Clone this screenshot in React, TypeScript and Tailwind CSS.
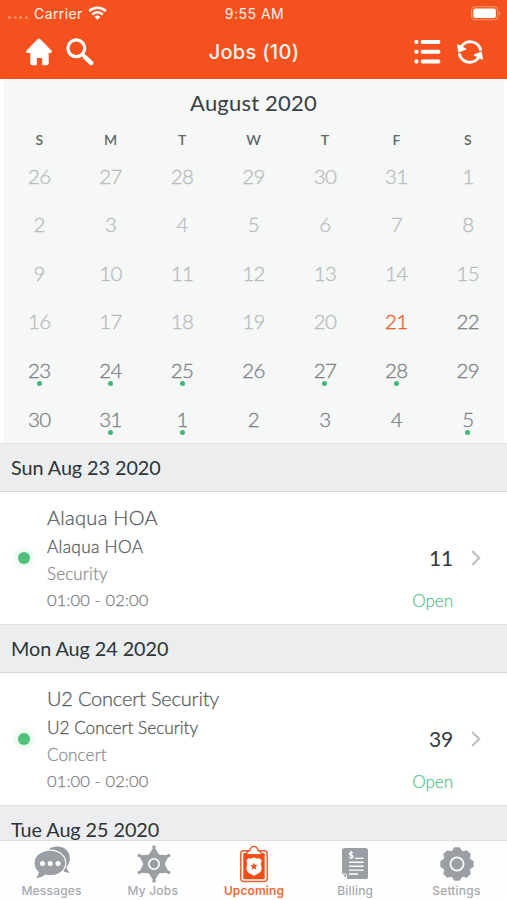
import React from "react";

const lato = "font-['Lato','Open_Sans',sans-serif]";
const inter = "font-['Inter','Roboto',sans-serif]";

type Day = { n: number; tone: "past" | "today" | "next"; dot?: boolean };

const past = (n: number): Day => ({ n, tone: "past" });
const next = (n: number, dot = false): Day => ({ n, tone: "next", dot });

const days: Day[] = [
  ...[26, 27, 28, 29, 30, 31, 1, 2, 3, 4, 5, 6, 7, 8, 9, 10, 11, 12, 13, 14, 15, 16, 17, 18, 19, 20].map(past),
  { n: 21, tone: "today" },
  next(22),
  next(23, true),
  next(24, true),
  next(25, true),
  next(26),
  next(27, true),
  next(28, true),
  next(29),
  next(30),
  next(31, true),
  next(1, true),
  next(2),
  next(3),
  next(4),
  next(5, true),
];

const tones = {
  past: "text-[#b9bdc0]",
  today: "text-[#f2592a]",
  next: "text-[#7f8588]",
};

function StatusBar() {
  return (
    <div className={`grid h-[26px] grid-cols-3 items-center pr-[6px] pl-[8px] text-[14px] text-[#fff3ec] ${inter}`}>
      <div className="flex items-center">
        <div className="mt-[8px] flex w-[26px] gap-[2.5px]">
          {[0, 1, 2, 3].map((i) => (
            <span key={i} className="size-[3px] rounded-full bg-[#fb9468]" />
          ))}
        </div>
        <span className="tracking-[0.4px]">Carrier</span>
        <svg className="ml-[5px]" width="19" height="14" viewBox="0 0 19 14" fill="none" stroke="#fff" strokeWidth="2.5">
          <path d="M1.2 5.2a11.8 11.8 0 0 1 16.6 0" />
          <path d="M4.2 8.5a7.5 7.5 0 0 1 10.6 0" />
          <path d="M9.5 13.8 6.6 10.9a4.1 4.1 0 0 1 5.8 0z" fill="#fff" stroke="none" />
        </svg>
      </div>
      <span className="text-center tracking-[0.5px]">9:55 AM</span>
      <svg className="justify-self-end" width="30" height="15" viewBox="0 0 30 15">
        <rect x="0.6" y="0.8" width="26" height="13" rx="3.5" fill="none" stroke="#fb9a72" strokeWidth="1.1" />
        <rect x="2.3" y="2.5" width="22.6" height="9.6" rx="2" fill="#fff" />
        <path d="M28 5v4.6c1.8-.8 1.8-3.8 0-4.6z" fill="#fb9a72" />
      </svg>
    </div>
  );
}

function NavBar() {
  return (
    <div className="flex h-[52px] items-center justify-between pr-[24px] pl-[25px]">
      <div className="flex w-[80px] items-center gap-[13px]">
        <svg className="shrink-0" width="28" height="28" viewBox="0 0 28 28" fill="#fff">
          <path d="M12.6 1.3a1.9 1.9 0 0 1 2.8 0l11 11.3c1 1 .5 2.3-.8 2.3h-1.9v10.3c0 1.2-.8 2-2 2h-3.500c-.6 0-1-.4-1-1v-5.100c0-.7-.5-1.200-1.200-1.200h-3c-.7 0-1.200.5-1.200 1.200v5.100c0 .6-.4 1-1 1H7.300c-1.200 0-2-.8-2-2V14.900H2.400c-1.300 0-1.800-1.300-.8-2.300z" />
        </svg>
        <svg className="shrink-0" width="28" height="28" viewBox="0 0 28 28" fill="none" stroke="#fff" strokeLinecap="round">
          <circle cx="10.300" cy="10.300" r="8.400" strokeWidth="3.300" />
          <path d="m16.800 16.800 2 2" strokeWidth="3.200" />
          <path d="m19.300 19.300 5.800 5.500" strokeWidth="4.600" />
        </svg>
      </div>
      <h1 className={`text-[20px] font-medium tracking-[0.3px] text-[#fff6f0] ${inter}`}>Jobs (10)</h1>
      <div className="flex w-[80px] items-center justify-end gap-[16px]">
        <svg width="27" height="26" viewBox="0 0 27 26" fill="#fff">
          {[1, 10.8, 20.6].map((y) => (
            <React.Fragment key={y}>
              <rect x="0.500" y={y} width="3.900" height="3.900" rx="1.400" />
              <rect x="6.800" y={y} width="19.500" height="3.900" rx="1.400" />
            </React.Fragment>
          ))}
        </svg>
        <svg width="26" height="26" viewBox="0 0 26 26" fill="none" stroke="#fff" strokeWidth="3">
          <path d="M3.600 8.800A10.700 10.700 0 0 1 23.800 11.800" />
          <path d="M22.400 17.200A10.700 10.700 0 0 1 2.200 14.200" />
          <path d="M.9 6.300 2 12.400 8.400 10z" fill="#fff" strokeWidth="1.800" strokeLinejoin="round" />
          <path d="M25.100 19.700 24 13.600 17.600 16z" fill="#fff" strokeWidth="1.800" strokeLinejoin="round" />
        </svg>
      </div>
    </div>
  );
}

function Calendar() {
  return (
    <section className={`mx-[3.5px] h-[364px] shrink-0 bg-[#f6f7f7] ${lato}`}>
      <h2 className="flex h-[48px] items-center justify-center pb-[2px] text-[22px] tracking-[0.2px] text-[#394044]">August 2020</h2>
      <div className="grid h-[25px] grid-cols-7 items-center text-center text-[14px] font-semibold text-[#5b6a68]">
        {["S", "M", "T", "W", "T", "F", "S"].map((d, i) => (
          <span key={i}>{d}</span>
        ))}
      </div>
      <div className="grid auto-rows-[48.6px] grid-cols-7 text-center text-[20.5px] font-light tracking-[-0.6px]">
        {days.map((d, i) => (
          <div
            key={i}
            className={`flex flex-col items-center pt-[10.6px] leading-[27px] [-webkit-text-stroke:0.35px_currentColor] ${tones[d.tone]}`}
          >
            {d.n}
            {d.dot && <span className="-mt-[3px] size-[5px] rounded-full bg-[#3dba74]" />}
          </div>
        ))}
      </div>
    </section>
  );
}

function DateHeader({ children }: { children: string }) {
  return (
    <h3
      className={`flex h-[49px] shrink-0 items-center border-y border-t-[#dfe1e3] border-b-[#d6d9dc] bg-[#ebedee] pb-[1px] pl-[11px] text-[19.8px] leading-[24px] tracking-[-0.05px] text-[#2d3437] ${lato}`}
    >
      {children}
    </h3>
  );
}

type Job = { title: string; kind: string; count: number; titleTracking: string; venueTracking: string };

function JobRow({ title, kind, count, titleTracking, venueTracking }: Job) {
  return (
    <div className={`flex h-[132px] shrink-0 bg-white ${lato}`}>
      <div className="flex w-[47px] items-center justify-center">
        <span className="size-[12px] rounded-full bg-[#50bf79] shadow-[0_0_7px_2px_#d5f3e0]" />
      </div>
      <div className="flex-1 pt-[10px] font-light [-webkit-text-stroke:0.3px_currentColor]">
        <div className={`h-[30px] text-[20px] leading-[30px] text-[#5a6164] ${titleTracking}`}>{title}</div>
        <div className={`h-[28px] text-[17.3px] leading-[29px] text-[#565d60] ${venueTracking}`}>{title}</div>
        <div className="h-[27px] text-[17px] leading-[28px] tracking-[0.15px] text-[#8b9093]">{kind}</div>
        <div className="h-[26px] text-[16.5px] leading-[27px] tracking-[0.15px] text-[#7c8184]">01:00 - 02:00</div>
      </div>
      <div className="flex flex-col items-end pt-[52px] text-right">
        <div className="h-[27px] text-[21px] leading-[27px] tracking-[-0.2px] text-[#33393d]">{count}</div>
        <div className="mt-[16px] h-[26px] text-[17px] leading-[27px] font-light text-[#63c892] [-webkit-text-stroke:0.3px_currentColor]">
          Open
        </div>
      </div>
      <div className="flex w-[54px] items-center pl-[18px]">
        <svg width="10" height="16" viewBox="0 0 10 16" fill="none" stroke="#bfc0c1" strokeWidth="2.200">
          <path d="m1.200 1 7 7-7 7" />
        </svg>
      </div>
    </div>
  );
}

function starPoints(cx: number, cy: number, outer: number, inner: number, tips: number) {
  return Array.from({ length: tips * 2 }, (_, i) => {
    const r = i % 2 ? inner : outer;
    const a = (Math.PI * i) / tips - Math.PI / 2;
    return `${(cx + r * Math.cos(a)).toFixed(2)},${(cy + r * Math.sin(a)).toFixed(2)}`;
  }).join(" ");
}

const MessagesIcon = () => (
  <svg width="38" height="38" viewBox="0 0 38 38">
    <path d="M24 1.500c7.500 0 12.800 4.800 12.800 11.400 0 3.800-1.500 6.800-3.300 8.900.3 2.600 1.400 4.600 3.300 6-3.300.1-6-.9-8-2.800C20 27 10 22 12 12 13 5 17.500 1.500 24 1.500z" fill="#969ba2" />
    <path d="M17 5.200c9.200 0 15.800 5.500 15.800 12.800S26.200 30.800 17 30.800c-1.700 0-3.200-.2-4.700-.6-2.800 2.400-6 3.600-10.700 3.500 2.300-1.900 3.400-4 3.500-6.600C2.400 24.700 1 21.600 1 18 1 10.700 7.800 5.200 17 5.200z" fill="#9a9fa6" stroke="#fff" strokeWidth="1.200" />
    <circle cx="9.500" cy="18.500" r="2.500" fill="#fff" />
    <circle cx="17.200" cy="18.500" r="2.500" fill="#fff" />
    <circle cx="25" cy="18.500" r="2.500" fill="#fff" />
  </svg>
);

const BadgeIcon = () => (
  <svg className="ml-[3px]" width="38" height="38" viewBox="0 0 38 38" fill="#9a9fa6">
    <polygon points={starPoints(19, 19, 17.5, 10.6, 6)} />
    {[0, 1, 2, 3, 4, 5].map((i) => {
      const a = (Math.PI * i) / 3 - Math.PI / 2;
      return <circle key={i} cx={19 + 17 * Math.cos(a)} cy={19 + 17 * Math.sin(a)} r="1.800" />;
    })}
    <circle cx="19" cy="19" r="5.200" fill="none" stroke="#fff" strokeWidth="1.600" />
    <polygon points={starPoints(19, 19, 3.8, 1.7, 5)} />
  </svg>
);

const UpcomingIcon = () => (
  <svg className="ml-[1px]" width="30" height="38" viewBox="0 0 30 38">
    <rect x="1.800" y="5.800" width="26.400" height="30.700" rx="3" fill="#fff" stroke="#f0602f" strokeWidth="1.500" />
    <rect x="4.300" y="8" width="21.400" height="26.200" rx="1" fill="#f04e17" />
    <path d="M7.500 9.800C7.500 6.500 9 6 10.800 5.500 11.600 2.500 13 1.400 15 1.400s3.400 1.100 4.200 4.100c1.800.5 3.300 1 3.300 4.300z" fill="#fff" stroke="#ee5422" strokeWidth="1.400" />
    <path d="M9.600 13.200c1.900.7 3.600.5 5.400-.9 1.800 1.400 3.500 1.600 5.400.9l2.500 2.600c-1.400 2-1.300 3.300-.6 5.300 1.300 4-1.100 6.600-3.500 7.700-1.500.6-2.700 1.100-3.800 2.300-1.100-1.200-2.300-1.700-3.800-2.300-2.400-1.100-4.800-3.700-3.500-7.700.7-2 .8-3.300-.6-5.300z" fill="#fff" />
    <polygon points={starPoints(15, 21.4, 4, 1.8, 5)} fill="#ee5422" />
  </svg>
);

const BillingIcon = () => (
  <svg width="28" height="33" viewBox="0 0 28 33">
    <path d="M3.600 1h20.800A2.600 2.600 0 0 1 27 3.600v25.800a2.600 2.600 0 0 1-2.600 2.600H6.200L1 26.800V3.600A2.600 2.600 0 0 1 3.600 1z" fill="#9a9fa6" />
    <path d="M1.500 27h2.600c1 0 1.500.5 1.500 1.500v2.600" fill="none" stroke="#fff" strokeWidth="1" />
    <path d="M14 11.400h8.600M8 15.300h14.600M8 19.200h14.600M8 23.100h14.600M8 27h9" stroke="#fff" strokeWidth="1.400" />
    <path d="M12 6.100c-.5-.8-3.600-1-3.600.7 0 1.800 3.700.9 3.700 2.900 0 1.900-3.400 1.700-4 .6M10.200 3.800v8" fill="none" stroke="#fff" strokeWidth="1.200" />
  </svg>
);

const SettingsIcon = () => (
  <svg className="ml-[1px]" width="36" height="36" viewBox="0 0 36 36">
    <g fill="#9a9fa6">
      <circle cx="18" cy="18" r="14" />
      {[0, 45, 90, 135, 180, 225, 270, 315].map((a) => (
        <path key={a} d="M12.500 6 14.600 2.200Q14.900 1.300 16 1.300H20Q21.100 1.300 21.400 2.200L23.500 6z" transform={`rotate(${a} 18 18)`} />
      ))}
    </g>
    <circle cx="18" cy="18" r="6.600" fill="none" stroke="#fff" strokeWidth="1.700" />
  </svg>
);

const tabs = [
  { label: "Messages", icon: <MessagesIcon /> },
  { label: "My Jobs", icon: <BadgeIcon /> },
  { label: "Upcoming", icon: <UpcomingIcon />, active: true },
  { label: "Billing", icon: <BillingIcon /> },
  { label: "Settings", icon: <SettingsIcon /> },
];

function TabBar() {
  return (
    <nav className={`grid h-[60px] shrink-0 grid-cols-5 border-t border-[#dcdee0] bg-[#fdfdfd] pl-[1px] ${inter}`}>
      {tabs.map((t) => (
        <div key={t.label} className="flex flex-col items-center">
          <div className="mt-[3px] flex h-[39px] items-center justify-center">{t.icon}</div>
          <span
            className={
              t.active
                ? "text-[12px] leading-[16px] font-semibold tracking-[0.1px] text-[#f4693d]"
                : "text-[12px] leading-[16px] font-medium tracking-[0.2px] text-[#a5a9ae]"
            }
          >
            {t.label}
          </span>
        </div>
      ))}
    </nav>
  );
}

export default function App() {
  return (
    <div className="flex h-[900px] w-[507px] flex-col overflow-hidden bg-white">
      <header className="h-[79px] shrink-0 bg-[#f5511e]">
        <StatusBar />
        <NavBar />
      </header>
      <main className="flex min-h-0 flex-1 flex-col overflow-hidden">
        <Calendar />
        <DateHeader>Sun Aug 23 2020</DateHeader>
        <JobRow title="Alaqua HOA" kind="Security" count={11} titleTracking="tracking-[0.3px]" venueTracking="tracking-[0.3px]" />
        <DateHeader>Mon Aug 24 2020</DateHeader>
        <JobRow
          title="U2 Concert Security"
          kind="Concert"
          count={39}
          titleTracking="tracking-[-0.2px]"
          venueTracking="tracking-[-0.05px]"
        />
        <DateHeader>Tue Aug 25 2020</DateHeader>
      </main>
      <TabBar />
    </div>
  );
}
